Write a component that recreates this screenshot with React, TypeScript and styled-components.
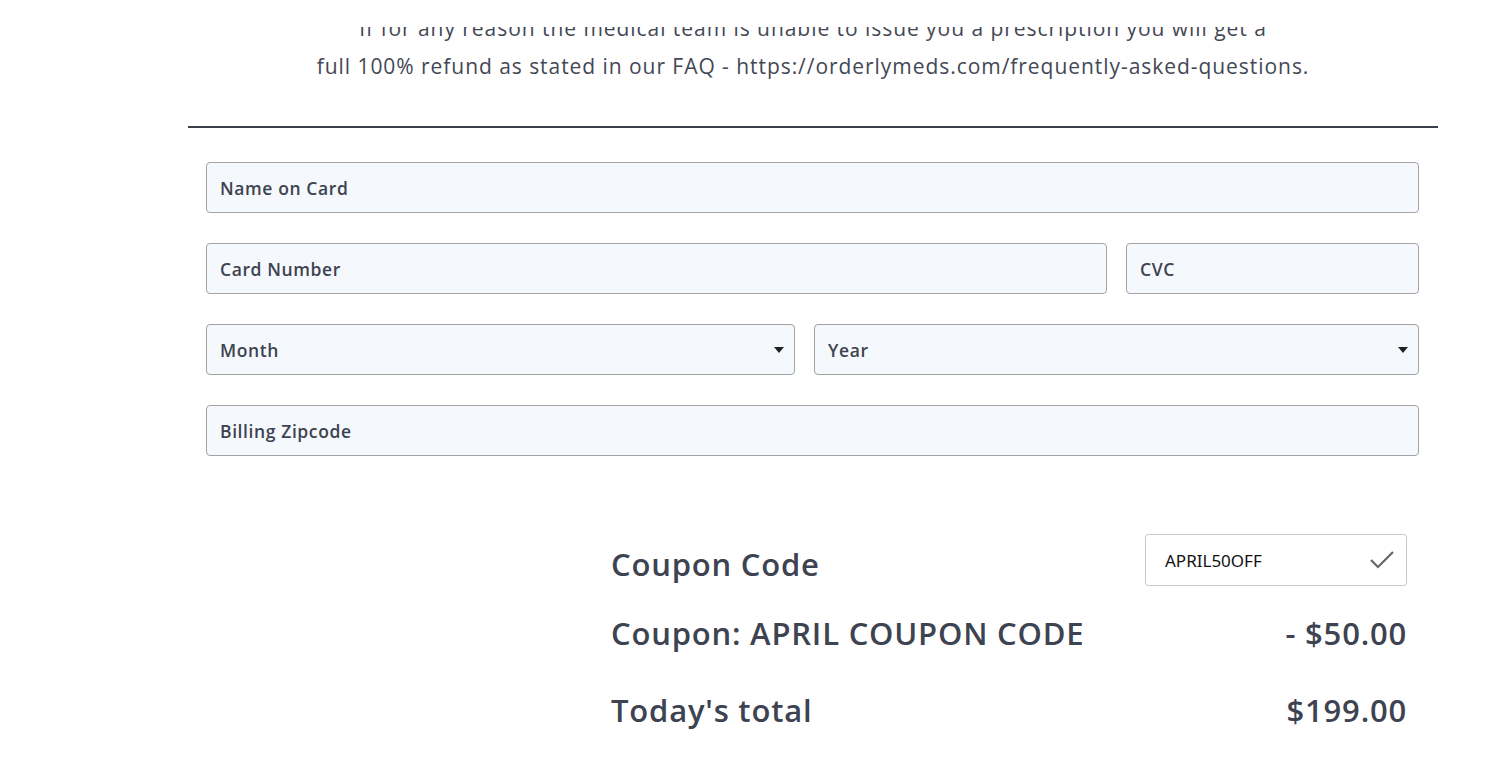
import styled, { createGlobalStyle } from "styled-components";

const GlobalStyle = createGlobalStyle`
  html, body {
    margin: 0;
    padding: 0;
    background: #ffffff;
    overflow: hidden;
  }
  body {
    font-family: "Open Sans", "Noto Sans", sans-serif;
    color: #3d4350;
  }
`;

const Caret = () => (
  <svg width="10" height="6" viewBox="0 0 10 6">
    <path d="M0 0 H10 L5 6 Z" fill="#222" />
  </svg>
);

const Check = () => (
  <svg width="26" height="20" viewBox="0 0 26 20">
    <path d="M2 10 L9 17 L24 2" fill="none" stroke="#666" strokeWidth="2.2" />
  </svg>
);

export default function App() {
  return (
    <>
      <GlobalStyle />
      <HeaderMask />
      <Page>
        <Notice>
          If for any reason the medical team is unable to issue you a prescription you will get a
          <br />
          full 100% refund as stated in our FAQ - https://orderlymeds.com/frequently-asked-questions.
        </Notice>
        <Divider />
        <Form>
          <Row>
            <Field>Name on Card</Field>
          </Row>
          <Row cols="901fr 293fr">
            <Field>Card Number</Field>
            <Field>CVC</Field>
          </Row>
          <Row cols="589fr 605fr">
            <Select>
              Month
              <Caret />
            </Select>
            <Select>
              Year
              <Caret />
            </Select>
          </Row>
          <Row>
            <Field>Billing Zipcode</Field>
          </Row>
        </Form>
        <Summary>
          <SummaryRow spacing={0}>
            <Label drop={8}>Coupon Code</Label>
            <CouponBox>
              <CouponText>APRIL50OFF</CouponText>
              <Check />
            </CouponBox>
          </SummaryRow>
          <SummaryRow spacing={19}>
            <Label>Coupon: APRIL COUPON CODE</Label>
            <Label>- $50.00</Label>
          </SummaryRow>
          <SummaryRow spacing={25}>
            <Label>Today's total</Label>
            <Label>$199.00</Label>
          </SummaryRow>
        </Summary>
      </Page>
    </>
  );
}

// white strip of the sticky header that the page has scrolled under
const HeaderMask = styled.div`
  position: fixed;
  top: 0;
  left: 0;
  right: 0;
  height: 27px;
  background: #ffffff;
  z-index: 2;
`;

const Page = styled.div`
  width: 1250px;
  margin-left: 188px;
  margin-top: 9px;
`;

const Notice = styled.p`
  margin: 0;
  text-align: center;
  font-size: 21px;
  letter-spacing: 0.95px;
  line-height: 38px;
  color: #434854;
`;

const Divider = styled.hr`
  margin: 41px 0 0;
  border: none;
  border-top: 2px solid #3a3f4b;
`;

const Form = styled.div`
  display: flex;
  flex-direction: column;
  gap: 30px;
  padding: 34px 19px 0 18px;
`;

const Row = styled.div<{ cols?: string }>`
  display: grid;
  grid-template-columns: ${({ cols }) => cols ?? "1fr"};
  gap: 19px;
`;

const Field = styled.div`
  box-sizing: border-box;
  height: 51px;
  display: flex;
  align-items: center;
  padding: 0 13px;
  background: #f5f8fc;
  border: 1px solid #a3a3a3;
  border-radius: 4px;
  font-size: 17.5px;
  letter-spacing: 0.6px;
  font-weight: 600;
  color: #3d4350;
`;

const Select = styled(Field)`
  justify-content: space-between;
  padding-right: 10px;
`;

const Summary = styled.div`
  width: 796px;
  margin: 78px 31px 0 auto;
  display: flex;
  flex-direction: column;
`;

const SummaryRow = styled.div<{ spacing: number }>`
  display: flex;
  align-items: center;
  justify-content: space-between;
  height: 52px;
  margin-top: ${({ spacing }) => spacing}px;
`;

const Label = styled.span<{ drop?: number }>`
  padding-top: ${({ drop }) => drop ?? 4}px;
  font-size: 31px;
  letter-spacing: 0.8px;
  font-weight: 600;
  color: #3d4350;
`;

const CouponBox = styled.div`
  box-sizing: border-box;
  width: 262px;
  height: 52px;
  display: flex;
  align-items: center;
  justify-content: space-between;
  padding: 0 11px 0 19px;
  border: 1px solid #c8c8c8;
  border-radius: 3px;
  background: #fff;
`;

const CouponText = styled.span`
  font-family: "Noto Sans", sans-serif;
  font-size: 17px;
  color: #111;
`;
